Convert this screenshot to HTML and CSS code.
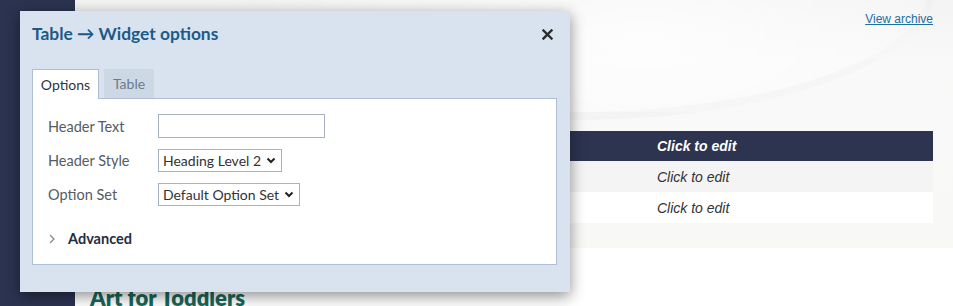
FILE: index.html
```html
<!DOCTYPE html>
<html lang="en">
<head>
<meta charset="utf-8">
<title>Table widget options</title>
<link rel="stylesheet" href="styles.css">
</head>
<body>
<div class="layout">
  <aside class="sidebar"></aside>
  <main class="main">
    <section class="hero">
      <div class="swoosh"></div>
      <div class="archive-row"><a href="#" class="archive">View archive</a></div>
      <table class="data">
        <colgroup><col><col><col></colgroup>
        <thead>
          <tr><th>Click to edit</th><th>Click to edit</th><th>Click to edit</th></tr>
        </thead>
        <tbody>
          <tr class="odd"><td>Click to edit</td><td>Click to edit</td><td>Click to edit</td></tr>
          <tr><td>Click to edit</td><td>Click to edit</td><td>Click to edit</td></tr>
        </tbody>
      </table>
    </section>
    <h2 class="page-title">Art for Toddlers</h2>
  </main>
</div>

<div class="modal">
  <div class="modal-head">
    <h3 class="modal-title">Table → Widget options</h3>
    <button class="close" type="button" aria-label="Close">
      <svg width="11" height="11" viewBox="0 0 11 11"><path d="M1.5 1.5 L9.5 9.5 M9.5 1.5 L1.5 9.5" stroke="#2b2b2b" stroke-width="2.4" stroke-linecap="square"/></svg>
    </button>
  </div>
  <div class="tabs">
    <span class="tab active">Options</span>
    <span class="tab">Table</span>
  </div>
  <div class="panel">
    <div class="form">
      <label class="lbl">Header Text</label>
      <div class="ctl"><input class="text-input" type="text"></div>
      <label class="lbl">Header Style</label>
      <div class="ctl"><span class="sel-wrap"><select class="sel"><option>Heading Level 2</option></select><svg class="caret" width="10" height="7" viewBox="0 0 10 7"><path d="M1.5 1.5 L5 5 L8.5 1.5" fill="none" stroke="#222" stroke-width="2"/></svg></span></div>
      <label class="lbl">Option Set</label>
      <div class="ctl"><span class="sel-wrap"><select class="sel"><option>Default Option Set</option></select><svg class="caret" width="10" height="7" viewBox="0 0 10 7"><path d="M1.5 1.5 L5 5 L8.5 1.5" fill="none" stroke="#222" stroke-width="2"/></svg></span></div>
    </div>
    <div class="advanced">
      <svg class="chev" width="6" height="10" viewBox="0 0 6 10"><path d="M1 1 L5 5 L1 9" fill="none" stroke="#7f8c9c" stroke-width="1.3"/></svg>
      <span>Advanced</span>
    </div>
  </div>
</div>
</body>
</html>
```

FILE: styles.css
```css
* { box-sizing: border-box; }
html, body { margin: 0; padding: 0; }
body {
  width: 953px;
  height: 306px;
  overflow: hidden;
  background: #ffffff;
  font-family: "Lato", "Open Sans", sans-serif;
  position: relative;
}
.layout {
  display: flex;
  height: 306px;
}
.sidebar {
  width: 75px;
  flex: none;
  background: #2b3350;
}
.main {
  flex: 1;
  display: flex;
  flex-direction: column;
  overflow: hidden;
}
.hero {
  position: relative;
  flex: none;
  height: 248px;
  background: linear-gradient(180deg, #f3f3f3 0%, #f9f9f9 25%, #f8f8f7 100%);
  padding: 12px 20px 0 15px;
  overflow: hidden;
}
.swoosh {
  position: absolute;
  left: 140px;
  top: -140px;
  width: 720px;
  height: 260px;
  border-radius: 50%;
  border-bottom: 8px solid rgba(0,0,0,0.018);
  border-right: 8px solid rgba(0,0,0,0.012);
  background: radial-gradient(ellipse at 60% 70%, rgba(255,255,255,0.7), rgba(255,255,255,0) 70%);
}
.archive-row {
  position: relative;
  display: flex;
  justify-content: flex-end;
  height: 119px;
}
.archive {
  font-family: "Liberation Sans", Arial, sans-serif;
  font-size: 12px;
  color: #1d6fa0;
  text-decoration: underline;
  line-height: 14px;
}
.data {
  position: relative;
  width: 843px;
  border-collapse: collapse;
  table-layout: fixed;
  font-family: "Liberation Sans", Arial, sans-serif;
  font-size: 14px;
  font-style: italic;
}
.data th, .data td {
  height: 30px;
  padding: 0 5px;
  text-align: left;
  vertical-align: middle;
}
.data th {
  background: #2d3450;
  color: #ffffff;
  font-weight: bold;
}
.data td { color: #333333; background: #ffffff; }
.data tr.odd td { background: #f4f4f4; }
.data tr td { height: 31px; }
.page-title {
  flex: none;
  margin: 36px 0 0 15px;
  font-family: "Lato", sans-serif;
  font-weight: 800;
  font-size: 22px;
  color: #17675a;
  line-height: 28px;
}

/* Modal */
.modal {
  position: absolute;
  left: 20px;
  top: 11px;
  width: 550px;
  height: 281px;
  background: #d9e3ef;
  box-shadow: 0 4px 14px rgba(0,0,0,0.45);
  padding: 12px 13px 0 12px;
  display: flex;
  flex-direction: column;
}
.modal-head {
  display: flex;
  align-items: center;
  justify-content: space-between;
  height: 22px;
}
.modal-title {
  margin: 0;
  font-size: 17.4px;
  font-weight: 700;
  color: #1d5a88;
  line-height: 22px;
}
.close {
  border: 0;
  background: none;
  padding: 0;
  margin-right: 4px;
  width: 11px;
  height: 11px;
  display: flex;
}
.tabs {
  margin-top: 24px;
  display: flex;
  gap: 5px;
  height: 30px;
  position: relative;
  z-index: 1;
}
.tab {
  display: flex;
  align-items: center;
  justify-content: center;
  height: 29px;
  padding: 0 8px;
  font-size: 14px;
  color: #6a7b8f;
  background: #cdd8e5;
  width: 50px;
}
.tab.active {
  height: 30px;
  background: #ffffff;
  color: #2f3440;
  border: 1px solid #aebfd3;
  border-bottom: 0;
  padding: 0 7px;
  width: 67px;
}
.panel {
  margin-top: -1px;
  background: #ffffff;
  border: 1px solid #aebfd3;
  height: 167px;
  padding: 15px 15px 0 15px;
}
.form {
  display: grid;
  grid-template-columns: 110px auto;
  row-gap: 11px;
  align-items: center;
}
.lbl {
  font-size: 14.5px;
  color: #555b63;
}
.ctl { display: flex; }
.text-input {
  width: 167px;
  height: 24px;
  border: 1px solid #a7b3c0;
  margin: 0;
  padding: 0 4px;
  background: #fff;
}
.sel-wrap {
  position: relative;
  display: inline-flex;
}
.sel {
  -webkit-appearance: none;
  appearance: none;
  height: 23px;
  margin: 0;
  border: 1px solid #a7b3c0;
  border-radius: 0;
  background: #fff;
  font-family: "Lato", sans-serif;
  font-size: 14px;
  color: #333;
  padding: 0 19px 0 4px;
}
.caret {
  position: absolute;
  right: 6px;
  top: 8px;
  pointer-events: none;
}
.advanced {
  margin-top: 24px;
  display: flex;
  align-items: center;
  gap: 13px;
  font-size: 14.5px;
  font-weight: 700;
  color: #1f2e44;
  padding-left: 1px;
}
```
